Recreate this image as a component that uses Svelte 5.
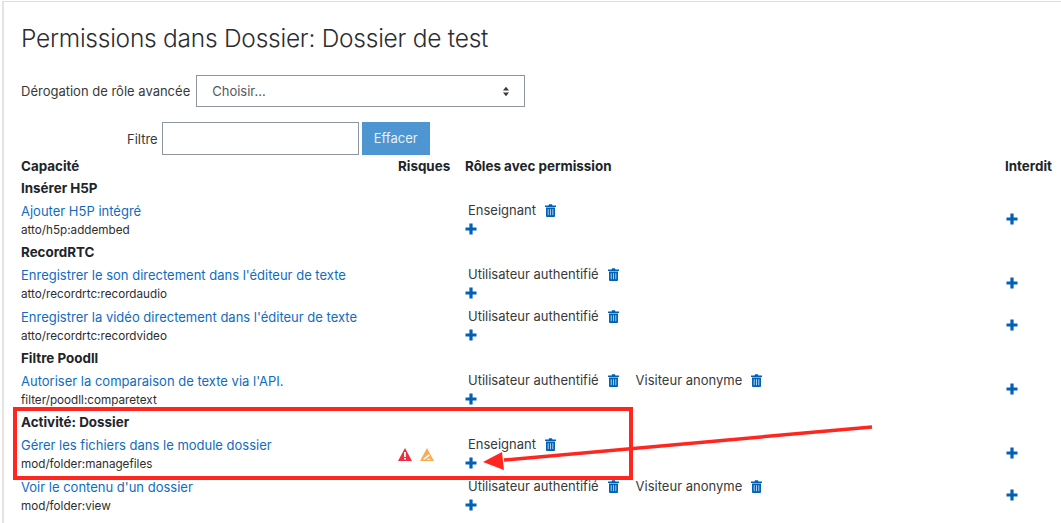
<script>
  const rows = [
    { group: 'Insérer H5P' },
    { name: 'Ajouter H5P intégré', cap: 'atto/h5p:addembed', roles: ['Enseignant'] },
    { group: 'RecordRTC' },
    { name: "Enregistrer le son directement dans l'éditeur de texte", cap: 'atto/recordrtc:recordaudio', roles: ['Utilisateur authentifié'] },
    { name: "Enregistrer la vidéo directement dans l'éditeur de texte", cap: 'atto/recordrtc:recordvideo', roles: ['Utilisateur authentifié'] },
    { group: 'Filtre Poodll' },
    { name: "Autoriser la comparaison de texte via l'API.", cap: 'filter/poodll:comparetext', roles: ['Utilisateur authentifié', 'Visiteur anonyme'] },
    { group: 'Activité: Dossier' },
    { name: 'Gérer les fichiers dans le module dossier', cap: 'mod/folder:managefiles', roles: ['Enseignant'], risks: true },
    { name: "Voir le contenu d'un dossier", cap: 'mod/folder:view', roles: ['Utilisateur authentifié', 'Visiteur anonyme'] }
  ];
</script>

{#snippet plus()}
  <svg class="plus" viewBox="0 0 12 12" aria-hidden="true"><path d="M4.400 0.500h3.200v3.900h3.900v3.200h-3.900v3.900h-3.200v-3.900h-3.900v-3.200h3.900z" /></svg>
{/snippet}

{#snippet trash()}
  <svg class="trash" viewBox="0 0 11 13" aria-hidden="true">
    <path d="M3.500 1.500 4.100.2h2.800l.6 1.300H11v1.500H0V1.500z" />
    <path d="M1 3.600h9V12a1 1 0 0 1-1 1H2a1 1 0 0 1-1-1z" />
    <path class="slots" d="M3.200 5.200v6M5.500 5.200v6M7.800 5.200v6" />
  </svg>
{/snippet}

<div class="page">
  <h2>Permissions dans Dossier: Dossier de test</h2>

  <div class="override">
    <span>Dérogation de rôle avancée</span>
    <div class="select">
      <span>Choisir...</span>
      <svg viewBox="0 0 8 12" aria-hidden="true"><path d="M4 .8 7.300 4.800H.7zM4 11.200.7 7.200h6.600z" /></svg>
    </div>
  </div>

  <div class="filter">
    <span>Filtre</span>
    <div class="input"></div>
    <div class="btn">Effacer</div>
  </div>

  <div class="table">
    <div class="row head">
      <div>Capacité</div>
      <div>Risques</div>
      <div>Rôles avec permission</div>
      <div>Interdit</div>
    </div>

    {#each rows as row}
      {#if row.group}
        <div class="group">{row.group}</div>
      {:else}
        <div class="row cap">
          <div class="name">
            <a href="#top">{row.name}</a>
            <small>{row.cap}</small>
          </div>
          <div class="risks">
            {#if row.risks}
              <svg viewBox="0 0 14 13" aria-hidden="true">
                <path class="red" d="M7 0 14 13H0z" />
                <path class="mark" d="M6.100 4h1.800v5H6.100zM6.100 10h1.800v1.600H6.100z" />
              </svg>
              <svg viewBox="0 0 14 13" aria-hidden="true">
                <path class="orange" d="M7 0 14 13H0z" />
                <path class="mark" d="M3.600 10.600 8.800 6.200l1.100 1.200-5.100 4.200H3.600zM7 10.700h3.600v1H7z" />
              </svg>
            {/if}
          </div>
          <div class="roles">
            <div class="assigned">
              {#each row.roles as role}
                <span class="role">{role}{@render trash()}</span>
              {/each}
            </div>
            {@render plus()}
          </div>
          <div class="forbid">{@render plus()}</div>
        </div>
      {/if}
    {/each}
  </div>

  <div class="mark-box"></div>
  <svg class="arrow" viewBox="0 0 400 50" aria-hidden="true">
    <path d="M392 7 24 40" />
    <polygon points="3,42 22,32 24,50" />
  </svg>
</div>

<style>
  :global(body) {
    margin: 0;
    background: #fff;
  }

  .page {
    position: relative;
    box-sizing: border-box;
    height: 522px;
    margin: 1px 0 0 2px;
    padding: 0 0 0 17px;
    border-top: 1px solid #dedede;
    border-left: 2px solid #e4e4e4;
    overflow: hidden;
    font-family: Inter, "Liberation Sans", sans-serif;
    font-size: 13px;
    color: #373a3c;
  }

  h2 {
    margin: 21px 0 0;
    font-size: 24.500px;
    font-weight: 300;
    letter-spacing: -0.25px;
    line-height: 30px;
    color: #2b2e30;
  }

  .override {
    display: flex;
    align-items: center;
    gap: 6px;
    margin-top: 22px;
  }

  .select {
    box-sizing: border-box;
    display: flex;
    align-items: center;
    justify-content: space-between;
    width: 329px;
    height: 32px;
    padding: 0 14px 0 15px;
    border: 1px solid #8f959e;
    color: #55595c;
  }

  .select svg {
    width: 8px;
    height: 11px;
    fill: #373a3c;
  }

  .filter {
    display: flex;
    align-items: center;
    margin: 15px 0 0 106px;
  }

  .input {
    box-sizing: border-box;
    width: 197px;
    height: 33px;
    margin: 0 3px 0 4px;
    border: 1px solid #8f959e;
  }

  .btn {
    box-sizing: border-box;
    width: 68px;
    height: 33px;
    line-height: 33px;
    text-align: center;
    background: #4e96d1;
    color: #e8f1f8;
  }

  .row {
    display: grid;
    grid-template-columns: 377px 67px 540px 1fr;
  }

  .head,
  .group {
    height: 22px;
    line-height: 22px;
    font-size: 13.400px;
    font-weight: 700;
    color: #212529;
  }

  .cap {
    height: 42px;
  }

  .name {
    display: flex;
    flex-direction: column;
    padding-top: 3px;
  }

  a {
    line-height: 19px;
    color: #0f6cbf;
    text-decoration: none;
  }

  small {
    line-height: 18px;
    font-size: 11.700px;
    color: #2b2e30;
  }

  .risks {
    display: flex;
    align-items: flex-end;
    gap: 8px;
    padding-bottom: 14px;
  }

  .risks svg {
    width: 14px;
    height: 13px;
  }

  .red {
    fill: #ee2f3f;
  }

  .orange {
    fill: #f6ad55;
  }

  .mark {
    fill: #fff;
  }

  .assigned {
    display: flex;
    gap: 17px;
    padding: 2px 0 0 3px;
    line-height: 19px;
  }

  .role {
    display: inline-flex;
    align-items: center;
    gap: 9px;
  }

  .roles .plus {
    display: block;
    margin-top: 3px;
  }

  .plus {
    width: 12px;
    height: 12px;
    fill: #0061b5;
  }

  .forbid {
    display: flex;
    align-items: center;
    padding-bottom: 3px;
    padding-left: 1px;
  }

  .trash {
    width: 11px;
    height: 13px;
    fill: #0061b5;
  }

  .slots {
    fill: none;
    stroke: #a9cdec;
    stroke-width: 1;
  }

  .mark-box {
    position: absolute;
    left: 9px;
    top: 405px;
    width: 620px;
    height: 73px;
    border: 4px solid #ff2620;
    box-sizing: border-box;
  }

  .arrow {
    position: absolute;
    left: 476px;
    top: 418px;
    width: 400px;
    height: 50px;
  }

  .arrow path {
    fill: none;
    stroke: #ff2620;
    stroke-width: 3.500;
  }

  .arrow polygon {
    fill: #ff2620;
  }
</style>
